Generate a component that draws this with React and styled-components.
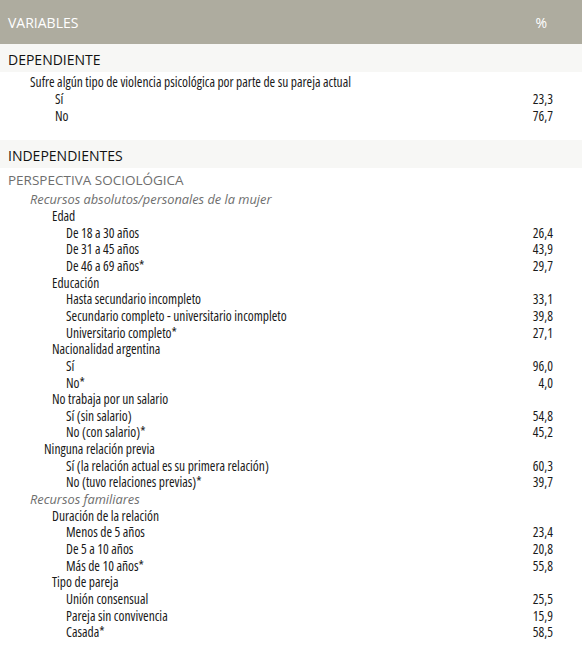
import React from 'react';
import styled, { createGlobalStyle } from 'styled-components';

const GlobalStyle = createGlobalStyle`
  html, body {
    margin: 0;
    padding: 0;
    background: #ffffff;
  }
  body {
    font-family: 'Open Sans', 'Liberation Sans', sans-serif;
    font-stretch: 75%;
    color: #1a1a1a;
  }
`;

const dependent = [
  { text: 'Sufre algún tipo de violencia psicológica por parte de su pareja actual', indent: 30 },
  { text: 'Sí', indent: 55, value: '23,3' },
  { text: 'No', indent: 55, value: '76,7' },
];

const independent = [
  { text: 'Recursos absolutos/personales de la mujer', indent: 30, sub: true },
  { text: 'Edad', indent: 52 },
  { text: 'De 18 a 30 años', indent: 66, value: '26,4' },
  { text: 'De 31 a 45 años', indent: 66, value: '43,9' },
  { text: 'De 46 a 69 años*', indent: 66, value: '29,7' },
  { text: 'Educación', indent: 52 },
  { text: 'Hasta secundario incompleto', indent: 66, value: '33,1' },
  { text: 'Secundario completo - universitario incompleto', indent: 66, value: '39,8' },
  { text: 'Universitario completo*', indent: 66, value: '27,1' },
  { text: 'Nacionalidad argentina', indent: 52 },
  { text: 'Sí', indent: 66, value: '96,0' },
  { text: 'No*', indent: 66, value: '4,0' },
  { text: 'No trabaja por un salario', indent: 52 },
  { text: 'Sí (sin salario)', indent: 66, value: '54,8' },
  { text: 'No (con salario)*', indent: 66, value: '45,2' },
  { text: 'Ninguna relación previa', indent: 44 },
  { text: 'Sí (la relación actual es su primera relación)', indent: 66, value: '60,3' },
  { text: 'No (tuvo relaciones previas)*', indent: 66, value: '39,7' },
  { text: 'Recursos familiares', indent: 30, sub: true },
  { text: 'Duración de la relación', indent: 52 },
  { text: 'Menos de 5 años', indent: 66, value: '23,4' },
  { text: 'De 5 a 10 años', indent: 66, value: '20,8' },
  { text: 'Más de 10 años*', indent: 66, value: '55,8' },
  { text: 'Tipo de pareja', indent: 52 },
  { text: 'Unión consensual', indent: 66, value: '25,5' },
  { text: 'Pareja sin convivencia', indent: 66, value: '15,9' },
  { text: 'Casada*', indent: 66, value: '58,5' },
];

export default function App() {
  return (
    <>
      <GlobalStyle />
      <Table>
        <Header>
          <span>VARIABLES</span>
          <Percent>%</Percent>
        </Header>
        <Band $top={0}>DEPENDIENTE</Band>
        <Section $top={2}>
          {dependent.map((r, i) => (
            <Row key={i} $indent={r.indent}>
              <Label>{r.text}</Label>
              <Value>{r.value}</Value>
            </Row>
          ))}
        </Section>
        <Band $top={16}>INDEPENDIENTES</Band>
        <Perspective>PERSPECTIVA SOCIOLÓGICA</Perspective>
        <Section $top={0}>
          {independent.map((r, i) => (
            <Row key={i} $indent={r.indent}>
              <Label $sub={r.sub}>{r.text}</Label>
              <Value>{r.value}</Value>
            </Row>
          ))}
        </Section>
      </Table>
    </>
  );
}

const Table = styled.div`
  width: 582px;
  display: flex;
  flex-direction: column;
`;

const Header = styled.div`
  height: 44px;
  background: #aeac9f;
  color: #ffffff;
  font-size: 14px;
  font-stretch: 100%;
  display: flex;
  align-items: center;
  justify-content: space-between;
  padding: 0 35px 0 8px;
`;

const Percent = styled.span`
  font-size: 14px;
`;

const Band = styled.div`
  margin-top: ${p => p.$top}px;
  height: 28px;
  background: #f7f7f5;
  font-size: 14px;
  font-stretch: 100%;
  color: #111111;
  display: flex;
  align-items: center;
  padding: 3px 8px 0;
  box-sizing: border-box;
`;

const Section = styled.div`
  display: flex;
  flex-direction: column;
  padding-top: ${p => p.$top}px;
`;

const Row = styled.div`
  height: 16.67px;
  display: flex;
  align-items: center;
  justify-content: space-between;
  padding: 0 29px 0 ${p => p.$indent}px;
  font-size: ${p => (p.$sub ? '12.8px' : '13.5px')};
`;

const Label = styled.span`
  white-space: nowrap;
  color: ${p => (p.$sub ? '#6e6e6e' : '#1a1a1a')};
  font-style: ${p => (p.$sub ? 'italic' : 'normal')};
  font-size: ${p => (p.$sub ? '12.8px' : '13.5px')};
  font-stretch: ${p => (p.$sub ? '100%' : '75%')};
`;

const Value = styled.span`
  color: #1a1a1a;
`;

const Perspective = styled.div`
  height: 21px;
  display: flex;
  align-items: center;
  padding: 2px 8px 0;
  font-size: 13.5px;
  font-stretch: 100%;
  color: #6e6e6e;
`;
